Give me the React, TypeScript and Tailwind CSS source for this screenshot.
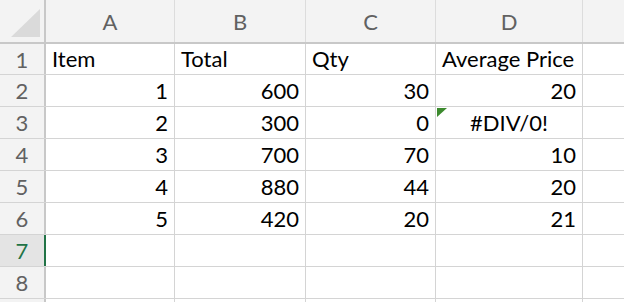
import React from "react";

const COLS = [
  { key: "A", w: "w-[129px]" },
  { key: "B", w: "w-[131px]" },
  { key: "C", w: "w-[130px]" },
  { key: "D", w: "w-[147px]" },
];

type Cell = { v: string; align?: "left" | "right" | "center"; error?: boolean };

const ROWS: Cell[][] = [
  [{ v: "Item" }, { v: "Total" }, { v: "Qty" }, { v: "Average Price" }],
  [{ v: "1", align: "right" }, { v: "600", align: "right" }, { v: "30", align: "right" }, { v: "20", align: "right" }],
  [{ v: "2", align: "right" }, { v: "300", align: "right" }, { v: "0", align: "right" }, { v: "#DIV/0!", align: "center", error: true }],
  [{ v: "3", align: "right" }, { v: "700", align: "right" }, { v: "70", align: "right" }, { v: "10", align: "right" }],
  [{ v: "4", align: "right" }, { v: "880", align: "right" }, { v: "44", align: "right" }, { v: "20", align: "right" }],
  [{ v: "5", align: "right" }, { v: "420", align: "right" }, { v: "20", align: "right" }, { v: "21", align: "right" }],
  [{ v: "" }, { v: "" }, { v: "" }, { v: "" }],
  [{ v: "" }, { v: "" }, { v: "" }, { v: "" }],
  [{ v: "" }, { v: "" }, { v: "" }, { v: "" }],
];

export default function App() {
  return (
    <div
      className="w-[624px] h-[302px] overflow-hidden bg-white text-[22px] text-black"
      style={{ fontFamily: "Lato, 'Open Sans', sans-serif" }}
    >
      {/* Column headers */}
      <div className="flex h-[44px] bg-[#f3f3f3] border-b-2 border-[#c8c8c8]">
        <div className="relative w-[46px] shrink-0 border-r-2 border-[#c8c8c8]">
          <svg className="absolute left-[11px] top-[9px]" width="30" height="29" viewBox="0 0 30 29">
            <polygon points="0,28 29,28 29,0" fill="#dadada" />
          </svg>
        </div>
        {COLS.map((c) => (
          <div
            key={c.key}
            className={`${c.w} shrink-0 border-r border-[#dcdcdc] flex items-center justify-center text-[#616161]`}
          >
            {c.key}
          </div>
        ))}
        <div className="flex-1" />
      </div>

      {/* Rows */}
      {ROWS.map((row, i) => {
        const selected = i === 6;
        return (
          <div key={i} className={`flex border-b border-[#d4d4d4] ${i === 0 ? "h-[31px]" : "h-[32px]"}`}>
            <div
              className={`relative w-[46px] shrink-0 border-r-2 flex items-center justify-center ${
                selected
                  ? "bg-[#e4e4e4] border-[#217346] text-[#217346]"
                  : "bg-[#f3f3f3] border-[#c8c8c8] text-[#616161]"
              }`}
            >
              {i < 8 ? i + 1 : ""}
            </div>
            {row.map((cell, j) => (
              <div
                key={j}
                className={`relative ${COLS[j].w} shrink-0 border-r border-[#d4d4d4] flex items-center px-[6px] leading-none ${
                  cell.align === "right"
                    ? "justify-end"
                    : cell.align === "center"
                    ? "justify-center"
                    : "justify-start"
                }`}
              >
                {cell.error && (
                  <svg className="absolute left-[1px] top-[1px]" width="10" height="9" viewBox="0 0 10 9">
                    <polygon points="0,0 10,0 0,9" fill="#3c8a2e" />
                  </svg>
                )}
                {cell.v}
              </div>
            ))}
            <div className="flex-1" />
          </div>
        );
      })}
    </div>
  );
}
